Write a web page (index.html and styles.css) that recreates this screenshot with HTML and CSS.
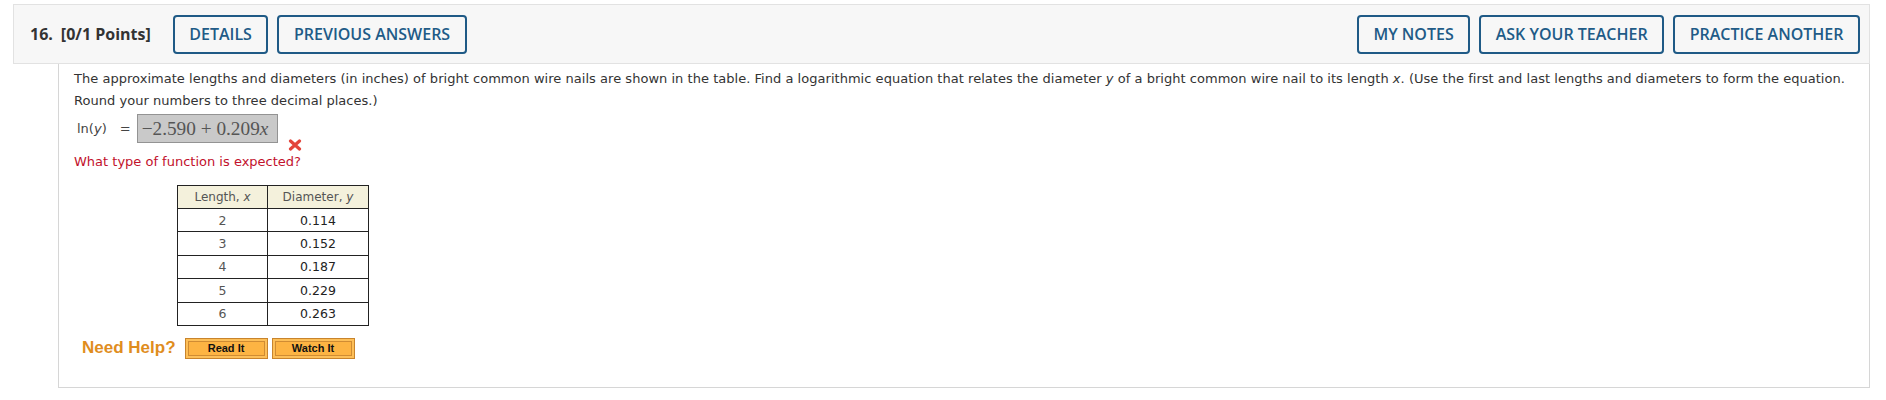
FILE: index.html
```html
<!DOCTYPE html>
<html>
<head>
<meta charset="utf-8">
<link rel="stylesheet" href="styles.css">
</head>
<body>
<div class="page">
  <div class="qhead">
    <div class="qtitle"><span class="qnum">16.</span><span>[0/1 Points]</span></div>
    <div class="btns">
      <button class="wbtn">DETAILS</button>
      <button class="wbtn">PREVIOUS ANSWERS</button>
    </div>
    <div class="spacer"></div>
    <div class="btns">
      <button class="wbtn">MY NOTES</button>
      <button class="wbtn">ASK YOUR TEACHER</button>
      <button class="wbtn">PRACTICE ANOTHER</button>
    </div>
  </div>
  <div class="qbody">
    <p class="prompt">The approximate lengths and diameters (in inches) of bright common wire nails are shown in the table. Find a logarithmic equation that relates the diameter <i>y</i> of a bright common wire nail to its length <i>x</i>. (Use the first and last lengths and diameters to form the equation. Round your numbers to three decimal places.)</p>
    <div class="eqrow">
      <span class="lhs">ln(<i>y</i>)</span>
      <span class="eq">=</span>
      <span class="answer">&minus;2.590 + 0.209<i>x</i></span>
      <svg class="wrong" width="14" height="12" viewBox="0 0 14 12"><path d="M2.5 2 L11.5 10 M11.5 2 L2.5 10" stroke="#e3443b" stroke-width="3.2" stroke-linecap="round"/></svg>
    </div>
    <p class="feedback">What type of function is expected?</p>
    <table class="data">
      <tr><th class="c1">Length, <i>x</i></th><th class="c2">Diameter, <i>y</i></th></tr>
      <tr><td class="c1">2</td><td class="c2">0.114</td></tr>
      <tr><td class="c1">3</td><td class="c2">0.152</td></tr>
      <tr><td class="c1">4</td><td class="c2">0.187</td></tr>
      <tr><td class="c1">5</td><td class="c2">0.229</td></tr>
      <tr><td class="c1">6</td><td class="c2">0.263</td></tr>
    </table>
    <div class="help">
      <span class="help-label">Need Help?</span>
      <button class="obtn">Read It</button>
      <button class="obtn">Watch It</button>
    </div>
  </div>
</div>
</body>
</html>
```

FILE: styles.css
```css
* { box-sizing: border-box; }
html, body { margin: 0; padding: 0; background: #fff; }
.page {
  padding: 4px 16px 0 13px;
}
.qhead {
  display: flex;
  align-items: center;
  height: 60px;
  background: #f7f7f7;
  border: 1px solid #e2e2e2;
  padding: 0 9px 0 16px;
}
.qtitle {
  font-family: "Open Sans", sans-serif;
  font-weight: 700;
  font-size: 16px;
  color: #333;
  margin-right: 22px;
}
.qnum { margin-right: 8px; }
.btns { display: flex; gap: 9px; }
.spacer { flex: 1; }
.wbtn {
  font-family: "Open Sans", sans-serif;
  font-size: 16px;
  font-weight: 600;
  color: #215b87;
  background: #f7f7f7;
  border: 2px solid #1f5a86;
  border-radius: 4px;
  height: 39px;
  padding: 0 14.5px;
  line-height: 35px;
  margin: 0;
}
.qbody {
  margin-left: 45px;
  border: 1px solid #d6d6d6;
  border-top: none;
  padding: 4px 15px 28px 15px;
  font-family: "DejaVu Sans", Verdana, sans-serif;
  font-size: 13px;
  color: #333;
}
.prompt {
  margin: 0;
  line-height: 22px;
  letter-spacing: 0.03px;
}
.eqrow {
  display: flex;
  align-items: flex-start;
  margin-top: 2px;
  height: 37px;
}
.lhs {
  margin-left: 3px;
  line-height: 29px;
  color: #444;
}
.eq {
  margin-left: 13px;
  margin-right: 6px;
  line-height: 29px;
  color: #444;
}
.answer {
  display: block;
  width: 141px;
  height: 29px;
  background: #c9c9c9;
  border: 1px solid #939393;
  font-family: "Liberation Serif", serif;
  font-size: 19.3px;
  line-height: 27px;
  color: #555;
  padding-left: 4px;
  white-space: nowrap;
}
.wrong {
  margin-left: 10px;
  margin-top: 25px;
}
.feedback {
  margin: 0;
  line-height: 22px;
  color: #c2112c;
}
.data {
  margin: 12px 0 0 103px;
  border-collapse: collapse;
  font-size: 12px;
}
.data th, .data td {
  border: 1px solid #222;
  padding: 0;
  text-align: center;
  font-weight: 400;
}
.data th {
  background: #f4f1dc;
  height: 23px;
  color: #555;
}
.data td { height: 23.4px; font-size: 12.5px; }
.data .c1 { width: 90px; }
.data .c2 { width: 101px; }
.data td.c1 { color: #555; }
.data td.c2 { color: #222; }
.help {
  display: flex;
  align-items: center;
  margin-top: 12px;
  padding-left: 8px;
  gap: 4px;
}
.help-label {
  font-family: "Liberation Sans", Arial, sans-serif;
  font-weight: 700;
  font-size: 17px;
  color: #e08d1e;
  margin-right: 5px;
}
.obtn {
  width: 83px;
  height: 21px;
  margin: 0;
  padding: 0;
  background: #fdb443;
  border: 1px solid #c8842c;
  box-shadow: inset 0 0 0 2px #fdbf58, inset 0 0 0 3px #d08c33;
  font-family: "Liberation Sans", Arial, sans-serif;
  font-weight: 700;
  font-size: 11px;
  color: #111;
  line-height: 19px;
}
```
